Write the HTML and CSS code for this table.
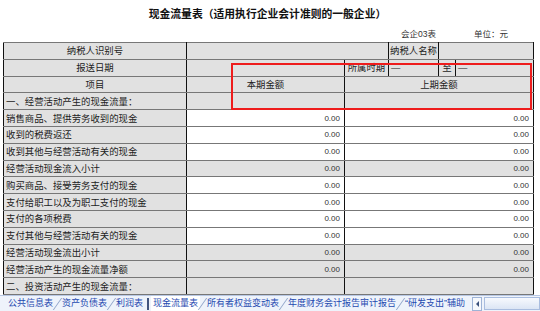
FILE: index.html
```html
<!DOCTYPE html>
<html lang="zh-CN">
<head>
    <meta charset="UTF-8">
    <meta name="viewport" content="width=device-width, initial-scale=1.0">
    <title>现金流量表</title>
    <link rel="stylesheet" href="styles.css">
</head>
<body>
    <div class="sheet">
        <h2 class="title">现金流量表（适用执行企业会计准则的一般企业）</h2>
        <div class="meta">
            <span>会企03表</span>
            <span>单位：元</span>
        </div>

        <table class="report">
            <colgroup>
                <col class="c-label">
                <col class="c-cur">
                <col class="c-a">
                <col class="c-b">
                <col class="c-c">
                <col class="c-d">
            </colgroup>
            <tr>
                <td class="head">纳税人识别号</td>
                <td colspan="2"></td>
                <td class="head">纳税人名称</td>
                <td colspan="2"></td>
            </tr>
            <tr>
                <td class="head">报送日期</td>
                <td></td>
                <td class="head">所属时期</td>
                <td class="left">—</td>
                <td class="head">至</td>
                <td class="left">—</td>
            </tr>
            <tr>
                <td class="head">项目</td>
                <td class="head">本期金额</td>
                <td class="head" colspan="4">上期金额</td>
            </tr>
            <tr>
                <td>一、经营活动产生的现金流量：</td>
                <td></td>
                <td colspan="4"></td>
            </tr>
            <tr>
                <td>销售商品、提供劳务收到的现金</td>
                <td class="num">0.00</td>
                <td class="num" colspan="4">0.00</td>
            </tr>
            <tr>
                <td>收到的税费返还</td>
                <td class="num">0.00</td>
                <td class="num" colspan="4">0.00</td>
            </tr>
            <tr>
                <td>收到其他与经营活动有关的现金</td>
                <td class="num">0.00</td>
                <td class="num" colspan="4">0.00</td>
            </tr>
            <tr>
                <td>经营活动现金流入小计</td>
                <td class="num sum">0.00</td>
                <td class="num sum" colspan="4">0.00</td>
            </tr>
            <tr>
                <td>购买商品、接受劳务支付的现金</td>
                <td class="num">0.00</td>
                <td class="num" colspan="4">0.00</td>
            </tr>
            <tr>
                <td>支付给职工以及为职工支付的现金</td>
                <td class="num">0.00</td>
                <td class="num" colspan="4">0.00</td>
            </tr>
            <tr>
                <td>支付的各项税费</td>
                <td class="num">0.00</td>
                <td class="num" colspan="4">0.00</td>
            </tr>
            <tr>
                <td>支付其他与经营活动有关的现金</td>
                <td class="num">0.00</td>
                <td class="num" colspan="4">0.00</td>
            </tr>
            <tr>
                <td>经营活动现金流出小计</td>
                <td class="num sum">0.00</td>
                <td class="num sum" colspan="4">0.00</td>
            </tr>
            <tr>
                <td>经营活动产生的现金流量净额</td>
                <td class="num sum">0.00</td>
                <td class="num sum" colspan="4">0.00</td>
            </tr>
            <tr>
                <td>二、投资活动产生的现金流量：</td>
                <td></td>
                <td colspan="4"></td>
            </tr>
            <tr>
                <td>收回投资收到的现金</td>
                <td class="num">0.00</td>
                <td class="num" colspan="4">0.00</td>
            </tr>
        </table>
    </div>

    <!-- red highlight drawn over the header cells -->
    <div class="highlight"></div>

    <div class="tabs">
        <span class="tab">公共信息表</span><span class="sep"></span>
        <span class="tab">资产负债表</span><span class="sep"></span>
        <span class="tab">利润表</span><span class="sep dark"></span>
        <span class="tab active">现金流量表</span><span class="sep"></span>
        <span class="tab">所有者权益变动表</span><span class="sep"></span>
        <span class="tab">年度财务会计报告审计报告</span><span class="sep"></span>
        <span class="tab">“研发支出”辅助</span>
        <span class="scroll-btn"><span class="arrow"></span></span>
        <span class="scroll-track"></span>
    </div>
</body>
</html>
```

FILE: styles.css
```css
body {
    margin: 0;
    height: 311px;
    display: flex;
    flex-direction: column;
    background: #fff;
    font-family: "Liberation Sans", "Noto Sans CJK SC", sans-serif;
    color: #222;
    overflow: hidden;
}
.sheet {
    height: 295px;
    overflow: hidden;
    padding-left: 3px;
}
.title {
    margin: 0;
    height: 26px;
    line-height: 28px;
    padding-right: 8px;
    text-align: center;
    font-size: 10.8px;
    font-weight: bold;
    color: #111;
}
.meta {
    display: flex;
    justify-content: flex-end;
    gap: 38px;
    height: 16px;
    line-height: 16px;
    padding-right: 32px;
    font-size: 8.5px;
    color: #333;
}

.report {
    width: 530px;
    table-layout: fixed;
    border-collapse: collapse;
    font-size: 9.4px;
    border: 1px solid #111;
}
.c-label { width: 183px; }
.c-cur { width: 158px; }
.c-a { width: 44px; }
.c-b { width: 50px; }
.c-c { width: 17px; }
.c-d { width: 78px; }

.report td {
    height: 15.8px;
    padding: 0 0 0 2px;
    border-top: 1px solid #777;
    border-bottom: 1px solid #777;
    border-left: 1px solid #111;
    border-right: 1px solid #111;
    background: #e1e1e1;
    white-space: nowrap;
    overflow: hidden;
    line-height: 15px;
}
.report td.head {
    text-align: center;
    padding: 0;
}
.report td.left {
    text-align: left;
}
.report td.num {
    text-align: right;
    padding: 0 4px 0 0;
    background: #fff;
    font-size: 8px;
    color: #333;
}
.report td.num.sum {
    background: #e1e1e1;
}

.highlight {
    position: absolute;
    left: 231px;
    top: 63px;
    width: 297px;
    height: 43px;
    border: 2px solid #ee1c1c;
}

.tabs {
    flex: 1;
    display: flex;
    align-items: center;
    padding-left: 6px;
    background: #eef3fb;
    border-top: 1px solid #b8c8e4;
    font-size: 9px;
    color: #1f4ab0;
    white-space: nowrap;
}
.tab {
    padding: 0 2px;
    line-height: 15px;
}
.tab.active {
    background: #fff;
}
.sep {
    display: inline-block;
    width: 1px;
    height: 12px;
    margin: 0 2px;
    background: #8fa3c8;
    transform: skewX(-35deg);
}
.sep.dark {
    background: #42557e;
    transform: none;
    width: 2px;
}
.scroll-btn {
    display: inline-flex;
    align-items: center;
    justify-content: center;
    width: 8px;
    height: 12px;
    margin-left: 5px;
    border: 1px solid #9eb3d6;
    background: #f6f8fc;
}
.arrow {
    width: 0;
    height: 0;
    border-top: 3px solid transparent;
    border-bottom: 3px solid transparent;
    border-right: 3px solid #3a4f7a;
}
.scroll-track {
    flex: 1;
    height: 11px;
    margin-left: 2px;
    border: 1px solid #a9bddf;
    background: linear-gradient(#f7f9fd, #dbe5f4);
}
```
